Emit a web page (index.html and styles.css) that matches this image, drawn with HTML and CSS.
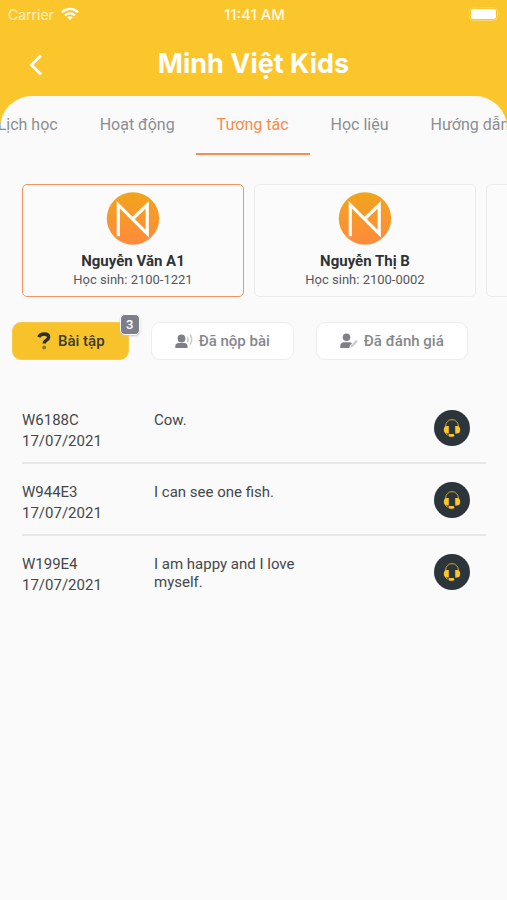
FILE: index.html
```html
<!DOCTYPE html>
<html lang="vi">
<head>
<meta charset="utf-8">
<meta name="viewport" content="width=device-width, initial-scale=1">
<title>Minh Việt Kids</title>
<link rel="stylesheet" href="styles.css">
</head>
<body>
<svg class="defs" aria-hidden="true">
  <defs>
    <linearGradient id="logo-fill" x1="0" y1="0" x2="0" y2="1">
      <stop offset="0" stop-color="#f0a51c"/>
      <stop offset="1" stop-color="#ff8a3c"/>
    </linearGradient>
    <symbol id="logo" viewBox="0 0 54 54">
      <circle cx="27" cy="27" r="26.700" fill="url(#logo-fill)"/>
      <path d="M12 45V13L41.500 42.500V13L27 27" fill="none" stroke="#fff" stroke-width="3.200" stroke-miterlimit="10"/>
    </symbol>
    <symbol id="headset" viewBox="0 0 18 18">
      <path d="M2.600 8V7a6.400 6.400 0 0 1 12.800 0v1M2.400 13c0 2 1.200 3 3.400 3.200" fill="none" stroke="#c9a12f" stroke-width="1"/>
      <path d="M5.800 7v7.400H4C1.800 14.400.8 12.800.8 10.700S1.800 7 4 7zM12.200 7v7.400H14c2.200 0 3.200-1.600 3.200-3.700S16.200 7 14 7z" fill="#fcc628"/>
      <rect x="5.800" y="15" width="5.400" height="2.700" rx=".9" fill="#fcc628"/>
    </symbol>
  </defs>
</svg>
<header class="top">
  <div class="status">
    <div class="carrier">Carrier
      <svg width="18" height="14" viewBox="0 0 18 14" aria-hidden="true" fill="none" stroke="#fff" stroke-width="2.300">
        <path d="M1 5.200a11.500 11.500 0 0 1 16 0M4 8.300a7.200 7.200 0 0 1 10 0"/>
        <path d="M9 13 6.300 10.500a4 4 0 0 1 5.400 0z" fill="#fff" stroke="none"/>
      </svg>
    </div>
    <div class="clock">11:41 AM</div>
    <div class="battery">
      <svg width="32" height="14" viewBox="0 0 32 14" aria-hidden="true">
        <rect x=".5" y=".5" width="28" height="13" rx="4" fill="none" stroke="#fcd868"/>
        <rect x="2" y="2" width="25" height="10" rx="2.500" fill="#fff"/>
        <path d="M30 5v4q2-2 0-4z" fill="#fcd868"/>
      </svg>
    </div>
  </div>
  <div class="title-bar">
    <button class="back" type="button" aria-label="Quay lại">
      <svg width="14" height="22" viewBox="0 0 14 22" aria-hidden="true"><path d="M12 1.500 2.500 11l9.500 9.500" fill="none" stroke="#fff" stroke-width="3"/></svg>
    </button>
    <h1>Minh Việt Kids</h1>
  </div>
</header>
<main class="sheet">
  <nav class="tabs">
    <a href="#">Lịch học</a>
    <a href="#">Hoạt động</a>
    <a href="#" class="active" aria-current="page">Tương tác</a>
    <a href="#">Học liệu</a>
    <a href="#">Hướng dẫn</a>
  </nav>
  <section class="students">
    <button type="button" class="student selected">
      <svg class="avatar" aria-hidden="true"><use href="#logo"/></svg>
      <strong>Nguyễn Văn A1</strong>
      <span>Học sinh: 2100-1221</span>
    </button>
    <button type="button" class="student">
      <svg class="avatar" aria-hidden="true"><use href="#logo"/></svg>
      <strong>Nguyễn Thị B</strong>
      <span>Học sinh: 2100-0002</span>
    </button>
    <div class="student"></div>
  </section>
  <section class="filters">
    <button type="button" class="filter current">
      <svg width="16" height="18" viewBox="0 0 16 18" aria-hidden="true">
        <path d="M2.800 5.200C4 2.300 6.500 2 8.300 2c2.500 0 4.300 1.200 4.300 3.200 0 3.200-4.400 2.600-4.400 6.200" fill="none" stroke="#2c3034" stroke-width="3.400"/>
        <circle cx="8.200" cy="15.500" r="1.900" fill="#8f7830"/>
      </svg>
      Bài tập
      <span class="badge">3</span>
    </button>
    <button type="button" class="filter">
      <svg width="18" height="16" viewBox="0 0 18 16" aria-hidden="true">
        <circle cx="6.500" cy="5.500" r="3.900" fill="#7d8087"/>
        <path d="M.3 15v-2c0-2 1.500-3 3.700-3h5c2.200 0 3.500 1 3.500 3v2z" fill="#7d8087"/>
        <path d="M12.300 4q1.600 2.500 0 5M15 1.500q3.400 5 0 10" fill="none" stroke="#c8cacd" stroke-width="1.500"/>
      </svg>
      Đã nộp bài
    </button>
    <button type="button" class="filter">
      <svg width="18" height="16" viewBox="0 0 18 16" aria-hidden="true">
        <circle cx="6.500" cy="4.300" r="3.800" fill="#7d8087"/>
        <path d="M.3 15v-2.500c0-2 1.600-3.300 3.700-3.300h5c1.400 0 2.400.5 3 1.200l-2.200 2.200-.4 2.400z" fill="#7d8087"/>
        <path d="m10.500 14.800.6-2.600L16.200 7l1.600 1.600-5.100 5.200z" fill="#c8cacd"/>
      </svg>
      Đã đánh giá
    </button>
  </section>
  <table class="tasks">
    <tbody>
      <tr>
        <td class="code">W6188C<br>17/07/2021</td>
        <td class="text">Cow.</td>
        <td class="action"><button type="button" aria-label="Nghe"><svg width="18" height="18" aria-hidden="true"><use href="#headset"/></svg></button></td>
      </tr>
      <tr>
        <td class="code">W944E3<br>17/07/2021</td>
        <td class="text">I can see one fish.</td>
        <td class="action"><button type="button" aria-label="Nghe"><svg width="18" height="18" aria-hidden="true"><use href="#headset"/></svg></button></td>
      </tr>
      <tr>
        <td class="code">W199E4<br>17/07/2021</td>
        <td class="text">I am happy and I love myself.</td>
        <td class="action"><button type="button" aria-label="Nghe"><svg width="18" height="18" aria-hidden="true"><use href="#headset"/></svg></button></td>
      </tr>
    </tbody>
  </table>
</main>
</body>
</html>
```
FILE: styles.css
```css
* { box-sizing: border-box; }
body {
  margin: 0;
  min-height: 100vh;
  overflow-x: hidden;
  background: #fafafa;
  color: #44474a;
  font-family: Roboto, "Liberation Sans", sans-serif;
  font-size: 16px;
}
button { font: inherit; color: inherit; cursor: pointer; }
.defs { position: absolute; width: 0; height: 0; }

.top {
  background: #fbc62b;
  color: #fff;
  padding-bottom: 24px;
  font-family: Inter, Roboto, sans-serif;
}
.status {
  display: grid;
  grid-template-columns: 1fr auto 1fr;
  align-items: center;
  height: 28px;
  padding: 0 6px 0 8px;
  font-size: 14px;
}
.carrier { display: flex; align-items: center; gap: 7px; color: #fff0c4; }
.clock { font-weight: 500; color: #fff8e2; font-size: 15px; }
.battery { display: flex; justify-content: flex-end; }
.title-bar {
  display: grid;
  grid-template-columns: 56px 1fr 56px;
  align-items: center;
  height: 72px;
}
.back {
  display: flex;
  align-items: center;
  justify-content: flex-end;
  height: 44px;
  padding: 2px 13px 0 0;
  border: 0;
  background: none;
}
h1 { margin: 0; text-align: center; font-size: 27px; line-height: 32px; font-weight: 700; }

.sheet {
  margin-top: -28px;
  padding-bottom: 24px;
  overflow: hidden;
}
.tabs {
  display: flex;
  justify-content: center;
  overflow: hidden;
  height: 60px;
  border-radius: 32px 32px 0 0;
  background: #fafafa;
}
.tabs a {
  flex: none;
  height: 59px;
  padding: 0 21px;
  line-height: 58px;
  color: #8b8e92;
  text-decoration: none;
}
.tabs a.active { color: #f58d4e; border-bottom: 2px solid #f58d4e; }

.students { display: flex; gap: 10px; overflow: hidden; padding: 28px 0 0 22px; }
.student {
  flex: none;
  display: flex;
  flex-direction: column;
  align-items: center;
  width: 222px;
  height: 113px;
  padding: 7px 8px;
  border: 1px solid #ececee;
  border-radius: 5px;
  background: #fbfbfb;
}
.student.selected { border-color: #f3955e; }
.avatar { width: 54px; height: 54px; }
.student strong { margin-top: 6px; font-size: 15px; line-height: 20px; color: #2f3337; }
.student span { font-size: 13px; line-height: 18px; color: #55585b; }

.filters { display: flex; gap: 22px; padding: 25px 12px 0; }
.filter {
  position: relative;
  display: flex;
  align-items: center;
  justify-content: center;
  gap: 6px;
  height: 38px;
  padding: 0 23px;
  border: 1px solid #ededef;
  border-radius: 9px;
  background: #fff;
  color: #85888c;
  font-size: 15px;
  font-weight: 500;
  white-space: nowrap;
}
.filter.current { background: #f8c32a; border-color: #f7ca4c; color: #3a3a33; }
.badge {
  position: absolute;
  top: -9px;
  right: -12px;
  width: 20px;
  height: 21px;
  border: 1px solid #fff;
  border-radius: 5px;
  background: #7c7f8a;
  box-shadow: 0 1px 2px #c4c5c9;
  color: #fff;
  font-size: 13px;
  line-height: 19px;
  text-align: center;
}

.tasks {
  width: calc(100% - 43px);
  margin: 32px 21px 0 22px;
  border-collapse: separate;
  border-spacing: 0;
  table-layout: fixed;
}
.tasks td { height: 72px; padding: 18px 0 8px; vertical-align: top; }
.tasks tr:not(:last-child) td { border-bottom: 2px solid #e8e8e9; }
.tasks .code { width: 132px; line-height: 21px; font-size: 15px; }
.tasks .text { padding-right: 120px; padding-top: 19px; line-height: 18px; font-size: 15px; }
.tasks .action { width: 52px; }
.tasks button {
  display: flex;
  align-items: center;
  justify-content: center;
  width: 36px;
  height: 36px;
  padding: 0;
  border: 0;
  border-radius: 50%;
  background: #2d353c;
}
```
